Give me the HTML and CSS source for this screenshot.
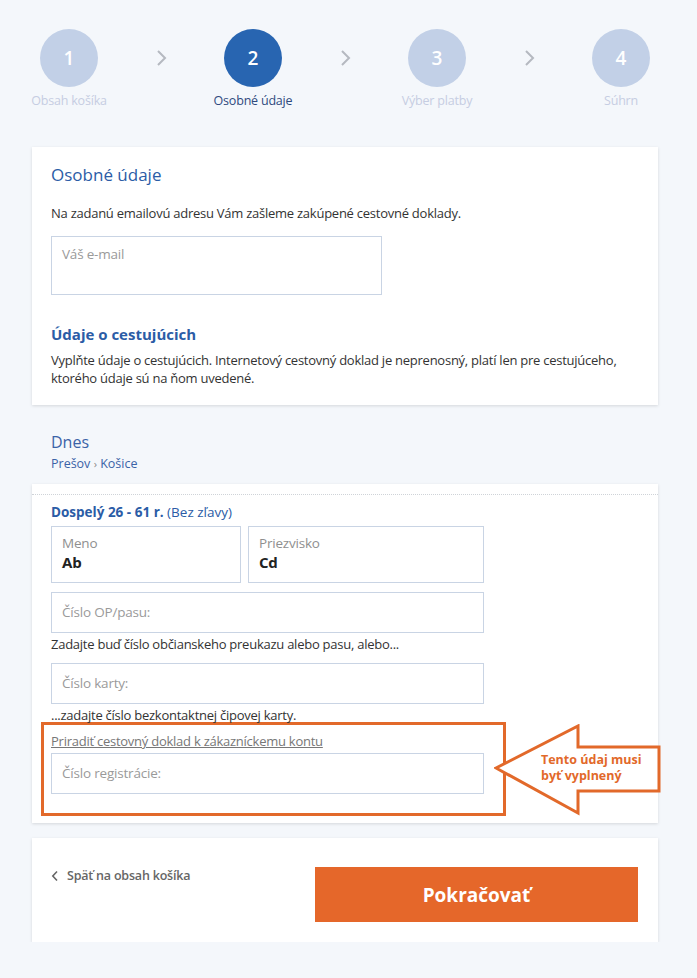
FILE: index.html
```html
<!DOCTYPE html>
<html lang="sk">
<head>
    <meta charset="UTF-8">
    <meta name="viewport" content="width=device-width, initial-scale=1.0">
    <title>Osobné údaje</title>
    <link rel="stylesheet" href="styles.css">
</head>
<body>
    <div class="steps">
        <div class="step">
            <div class="step-circle">1</div>
            <div class="step-label">Obsah košíka</div>
        </div>
        <div class="step-arrow">
            <svg width="12" height="18" viewBox="0 0 12 18"><path d="M3 2l7 7-7 7" fill="none" stroke="#b5b9c0" stroke-width="2"/></svg>
        </div>
        <div class="step active">
            <div class="step-circle">2</div>
            <div class="step-label">Osobné údaje</div>
        </div>
        <div class="step-arrow">
            <svg width="12" height="18" viewBox="0 0 12 18"><path d="M3 2l7 7-7 7" fill="none" stroke="#b5b9c0" stroke-width="2"/></svg>
        </div>
        <div class="step">
            <div class="step-circle">3</div>
            <div class="step-label">Výber platby</div>
        </div>
        <div class="step-arrow">
            <svg width="12" height="18" viewBox="0 0 12 18"><path d="M3 2l7 7-7 7" fill="none" stroke="#b5b9c0" stroke-width="2"/></svg>
        </div>
        <div class="step">
            <div class="step-circle">4</div>
            <div class="step-label">Súhrn</div>
        </div>
    </div>

    <div class="page">
        <div class="card personal">
            <h2>Osobné údaje</h2>
            <p class="intro">Na zadanú emailovú adresu Vám zašleme zakúpené cestovné doklady.</p>
            <div class="field email-field">Váš e-mail</div>

            <h3>Údaje o cestujúcich</h3>
            <p class="note">Vyplňte údaje o cestujúcich. Internetový cestovný doklad je neprenosný, platí len pre cestujúceho, ktorého údaje sú na ňom uvedené.</p>
        </div>

        <div class="trip">
            <div class="trip-day">Dnes</div>
            <div class="trip-route">Prešov <span class="route-sep">›</span> Košice</div>
        </div>

        <div class="card passenger">
            <div class="passenger-inner">
                <div class="passenger-type"><b>Dospelý 26 - 61 r.</b> (Bez zľavy)</div>
                <div class="name-row">
                    <div class="field name-field">
                        <span class="field-label">Meno</span>
                        <span class="field-value">Ab</span>
                    </div>
                    <div class="field name-field">
                        <span class="field-label">Priezvisko</span>
                        <span class="field-value">Cd</span>
                    </div>
                </div>
                <div class="field line-field first">Číslo OP/pasu:</div>
                <p class="hint">Zadajte buď číslo občianskeho preukazu alebo pasu, alebo...</p>
                <div class="field line-field">Číslo karty:</div>
                <p class="hint">...zadajte číslo bezkontaktnej čipovej karty.</p>

                <div class="highlight">
                    <a class="account-link" href="#">Priradiť cestovný doklad k zákazníckemu kontu</a>
                    <div class="field line-field reg">Číslo registrácie:</div>
                </div>
            </div>

            <div class="callout">
                <svg class="callout-arrow" width="168" height="92" viewBox="0 0 168 92">
                    <polygon points="2,44 84,2 84,23 165,23 165,67 84,67 84,89" fill="#fff" stroke="#e2692a" stroke-width="3"/>
                </svg>
                <div class="callout-text">Tento údaj musi<br>byť vyplnený</div>
            </div>
        </div>

        <div class="card actions">
            <a class="back-link" href="#">
                <svg width="8" height="12" viewBox="0 0 8 12"><path d="M6 1.5L1.8 6 6 10.5" fill="none" stroke="#666" stroke-width="1.6"/></svg>
                Späť na obsah košíka
            </a>
            <button class="continue" type="button">Pokračovať</button>
        </div>
    </div>
</body>
</html>
```

FILE: styles.css
```css
body {
    margin: 0;
    padding: 0;
    background: #f4f7fb;
    font-family: "Open Sans", Arial, sans-serif;
    color: #333;
}

/* steps */
.steps {
    display: flex;
    padding: 29px 0 0 9px;
    height: 113px;
    box-sizing: border-box;
}

.step {
    width: 120px;
    display: flex;
    flex-direction: column;
    align-items: center;
}

.step-circle {
    width: 58px;
    height: 58px;
    border-radius: 50%;
    background: #c2d0e7;
    color: #fff;
    font-size: 19px;
    font-weight: 600;
    display: flex;
    align-items: center;
    justify-content: center;
}

.step.active .step-circle {
    background: #2865b1;
}

.step-label {
    margin-top: 5px;
    font-size: 12.5px;
    line-height: 18px;
    color: #c6cde2;
    letter-spacing: -0.2px;
}

.step.active .step-label {
    color: #2f4a7e;
}

.step-arrow {
    width: 64px;
    height: 58px;
    display: flex;
    align-items: center;
    justify-content: center;
}

/* layout */
.page {
    width: 626px;
    margin-left: 32px;
    padding-top: 34px;
}

.card {
    background: #fff;
    box-shadow: 0 1px 3px rgba(0, 0, 0, 0.13);
}

.personal {
    padding: 16px 19px 18px;
}

h2 {
    margin: 0;
    font-size: 17px;
    line-height: 24px;
    font-weight: 400;
    color: #2b5ca6;
}

h3 {
    margin: 28px 0 0;
    font-size: 15px;
    line-height: 22px;
    font-weight: 700;
    color: #2b5ca6;
}

.intro,
.note,
.hint,
.account-link {
    font-size: 13px;
    line-height: 18px;
    letter-spacing: -0.25px;
}

.intro {
    margin: 17px 0 0;
}

.note {
    margin: 6px 0 0;
    padding-right: 20px;
}

.field {
    box-sizing: border-box;
    background: #fff;
    border: 1px solid #c9d4e4;
    color: #9a9a9a;
    font-size: 13.5px;
    letter-spacing: -0.2px;
}

.email-field {
    width: 331px;
    height: 59px;
    margin-top: 14px;
    padding: 8px 10px;
    line-height: 18px;
}

/* trip */
.trip {
    padding: 25px 0 10px 19px;
    color: #3b63a7;
}

.trip-day {
    font-size: 16px;
    line-height: 24px;
}

.trip-route {
    font-size: 12.5px;
    line-height: 20px;
}

.route-sep {
    color: #888;
    font-size: 11px;
}

/* passenger */
.passenger {
    position: relative;
    padding: 10px 0 7px;
}

.passenger-inner {
    border-top: 1px dotted #cfd3d8;
    padding: 7px 0 0 19px;
}

.passenger-type {
    font-size: 13.5px;
    line-height: 20px;
    color: #2b5ca6;
}

.name-row {
    display: grid;
    grid-template-columns: 190px 236px;
    column-gap: 7px;
    margin-top: 4px;
}

.name-field {
    height: 57px;
    padding: 7px 10px 0;
    display: flex;
    flex-direction: column;
}

.field-label {
    font-size: 13.5px;
    line-height: 18px;
    color: #8f8f8f;
}

.field-value {
    font-size: 15px;
    line-height: 20px;
    font-weight: 700;
    color: #222;
}

.line-field {
    width: 433px;
    height: 41px;
    padding: 0 10px;
    line-height: 39px;
    margin-top: 10px;
}

.line-field.first {
    margin-top: 9px;
}

.hint {
    margin: 2px 0 0;
}

.highlight {
    width: 446px;
    margin: -2px 0 0 -10px;
    padding: 7px 6px 19px 7px;
    border: 3px solid #e2692a;
}

.account-link {
    display: block;
    color: #777;
}

.line-field.reg {
    margin-top: 3px;
}

/* annotation drawn over the card edge */
.callout {
    position: absolute;
    left: 462px;
    top: 240px;
    width: 168px;
    height: 92px;
}

.callout-arrow {
    display: block;
}

.callout-text {
    position: absolute;
    left: 47px;
    top: 28px;
    font-size: 12.5px;
    line-height: 16px;
    font-weight: 700;
    color: #e2692a;
    white-space: nowrap;
}

/* actions */
.actions {
    margin-top: 15px;
    padding: 29px 20px 20px 19px;
    display: flex;
    justify-content: space-between;
    align-items: flex-start;
}

.back-link {
    display: flex;
    align-items: center;
    gap: 8px;
    font-size: 12.5px;
    line-height: 18px;
    font-weight: 600;
    color: #666;
    text-decoration: none;
    letter-spacing: -0.2px;
}

.continue {
    width: 323px;
    height: 55px;
    border: none;
    background: #e5672a;
    color: #fff;
    font-family: "Open Sans", Arial, sans-serif;
    font-size: 19px;
    font-weight: 700;
    cursor: pointer;
}
```
